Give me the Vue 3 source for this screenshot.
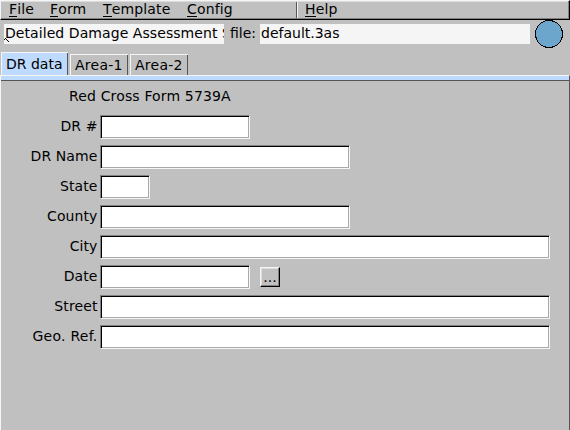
<script setup>
import { reactive } from 'vue'

const menus = ['File', 'Form', 'Template', 'Config', 'Help']
const tabs = ['DR data', 'Area-1', 'Area-2']
const fields = reactive([
  { label: 'DR #', size: 'medium', value: '' },
  { label: 'DR Name', size: 'large', value: '' },
  { label: 'State', size: 'small', value: '' },
  { label: 'County', size: 'large', value: '' },
  { label: 'City', size: 'full', value: '' },
  { label: 'Date', size: 'medium', value: '', picker: true },
  { label: 'Street', size: 'full', value: '' },
  { label: 'Geo. Ref.', size: 'full', value: '', wide: true },
])
</script>

<template>
  <div class="window">
    <nav class="menubar">
      <span v-for="m in menus" :key="m" class="menu" :class="'menu-' + m.toLowerCase()"><u>{{ m[0] }}</u>{{ m.slice(1) }}</span>
    </nav>
    <header class="info">
      <div class="output title">
        Detailed Damage Assessment S
        <svg class="caret" width="5" height="4" viewBox="0 0 5 4" shape-rendering="crispEdges">
          <path d="M0 1h1v1h-1zM1 0h1v1h-1zM2 1h1v1h-1zM3 2h1v1h-1zM4 3h1v1h-1z" />
        </svg>
      </div>
      <span class="file-label">file:</span>
      <div class="output file">default.3as</div>
      <svg class="lamp" width="28" height="28" viewBox="0 0 28 28" shape-rendering="crispEdges">
        <circle cx="14" cy="14" r="13.5" fill="#6ca6cd" stroke="#000" />
      </svg>
    </header>
    <div class="tabs">
      <div v-for="(t, i) in tabs" :key="t" class="tab" :class="{ active: i === 0 }">{{ t }}</div>
    </div>
    <main class="panel">
      <h1>Red Cross Form 5739A</h1>
      <div v-for="f in fields" :key="f.label" class="row">
        <label :class="{ wide: f.wide }">{{ f.label }}</label>
        <input v-model="f.value" :class="f.size" />
        <button v-if="f.picker">...</button>
      </div>
    </main>
  </div>
</template>

<style>
body { background: #c0c0c0; }
</style>

<style scoped>
* { box-sizing: border-box; }
.window {
  width: 570px;
  height: 430px;
  display: flex;
  flex-direction: column;
  overflow: hidden;
  background: #c0c0c0;
  color: #000;
  font: 14px/16px "DejaVu Sans", sans-serif;
  white-space: nowrap;
}
.menubar {
  height: 20px;
  flex: none;
  display: flex;
  border: 1px solid;
  border-color: #f4f4f4 #000 #000 #f4f4f4;
  box-shadow: inset -1px -1px #828282, inset 0 1px #dcdcdc;
  padding-left: 8px;
  letter-spacing: 0.15px;
}
.menu u { text-decoration: none; display: inline-block; height: 16px; border-bottom: 1px solid #000; vertical-align: top; }
.menu-file { width: 41px; }
.menu-form { width: 53px; }
.menu-template { width: 84px; }
.menu-config { width: 109px; }
.menu-help {
  border-left: 1px solid #555;
  box-shadow: inset 1px 0 #f4f4f4;
  height: 16px;
  margin-top: 1px;
  padding-left: 8px;
}
.menu-help, .menu-help u { line-height: 14px; }
.menu-help u { height: 15px; }
.info {
  height: 32px;
  flex: none;
  display: flex;
  align-items: flex-start;
  padding-left: 4px;
}
.output {
  position: relative;
  height: 20px;
  margin-top: 4px;
  padding: 1px 0 0 1px;
  background: #f5f5f5;
  overflow: hidden;
}
.title { width: 220px; letter-spacing: 0.07px; }
.file { width: 270px; }
.file-label { width: 36px; padding: 5px 0 0 6px; }
.caret { position: absolute; left: 0; bottom: 2px; }
.lamp { margin-left: 5px; }
.tabs {
  height: 23px;
  flex: none;
  display: flex;
  align-items: flex-end;
  gap: 2px;
  padding-left: 1px;
}
.tab {
  width: 58px;
  height: 21px;
  padding: 2px 0 0 4px;
  border: solid #f5f5f5;
  border-width: 1px 0 0 1px;
  box-shadow: inset -1px 0 #555;
  letter-spacing: 0.25px;
}
.tab.active {
  width: 67px;
  height: 23px;
  padding-top: 3px;
  background: #bfdaff;
  letter-spacing: 0;
}
.panel {
  flex: 1;
  border: solid #f5f5f5;
  border-width: 1px 1px 0;
  border-right-color: #555;
}
.panel::before {
  content: "";
  display: block;
  height: 4px;
  background: #bfdaff;
  border-bottom: 1px solid #555;
}
h1 { margin: 0; height: 34px; padding: 7px 0 0 68px; font: inherit; letter-spacing: 0.15px; }
.row { height: 30px; display: flex; align-items: flex-start; }
label { width: 99px; padding: 3px 2.5px 0 0; text-align: right; letter-spacing: 0.1px; }
label.wide { letter-spacing: 0.25px; }
input {
  height: 24px;
  margin: 0;
  padding: 2px 4px;
  outline: none;
  border: 1px solid;
  border-color: #828282 #f5f5f5 #f5f5f5 #828282;
  border-radius: 0;
  background: #fff;
  box-shadow: inset 1px 1px #000, inset -1px -1px #aaa;
  font: inherit;
}
.small { width: 50px; }
.medium { width: 150px; }
.large { width: 250px; }
.full { width: 450px; }
button {
  width: 20px;
  height: 20px;
  margin: 2px 0 0 10px;
  padding: 0;
  border: 1px solid;
  border-color: #f5f5f5 #000 #000 #f5f5f5;
  border-radius: 0;
  background: #c0c0c0;
  box-shadow: inset -1px -1px #828282, inset 1px 1px #dcdcdc;
  font: inherit;
  color: #000;
}
</style>
